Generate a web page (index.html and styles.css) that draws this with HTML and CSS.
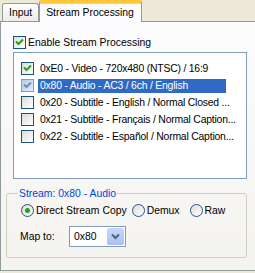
FILE: index.html
```
<!DOCTYPE html>
<html lang="en">
<head>
  <meta charset="UTF-8">
  <title>Stream Processing</title>
  <link rel="stylesheet" href="styles.css">
</head>
<body>
  <div class="tabs">
    <div class="tab">Input</div>
    <div class="tab active">Stream Processing</div>
  </div>

  <div class="panel">
    <div class="enable">
      <span class="cb checked"><svg width="11" height="11" viewBox="0 0 11 11"><path d="M2 4.5 L4.5 7 L9 2.5" fill="none" stroke="#21a121" stroke-width="2"/></svg></span>
      <span>Enable Stream Processing</span>
    </div>

    <ul class="streams">
      <li>
        <span class="cb checked"><svg width="11" height="11" viewBox="0 0 11 11"><path d="M2 4.5 L4.5 7 L9 2.5" fill="none" stroke="#21a121" stroke-width="2"/></svg></span>
        <span class="label">0xE0 - Video - 720x480 (NTSC) / 16:9</span>
      </li>
      <li class="selected">
        <span class="cb checked"><svg width="11" height="11" viewBox="0 0 11 11"><path d="M2 4.5 L4.5 7 L9 2.5" fill="none" stroke="#6f8fbf" stroke-width="2"/></svg></span>
        <span class="label">0x80 - Audio - AC3 / 6ch / English</span>
      </li>
      <li>
        <span class="cb"></span>
        <span class="label">0x20 - Subtitle - English / Normal Closed ...</span>
      </li>
      <li>
        <span class="cb"></span>
        <span class="label">0x21 - Subtitle - Français / Normal Caption...</span>
      </li>
      <li>
        <span class="cb"></span>
        <span class="label">0x22 - Subtitle - Español / Normal Caption...</span>
      </li>
    </ul>

    <fieldset class="group">
      <legend>Stream: 0x80 - Audio</legend>
      <div class="radios">
        <span class="radio on"><span class="dot"></span></span>
        <span class="radio-text">Direct Stream Copy</span>
        <span class="radio"></span>
        <span class="radio-text demux">Demux</span>
        <span class="radio"></span>
        <span class="radio-text">Raw</span>
      </div>
      <div class="map-row">
        <span class="map-label">Map to:</span>
        <div class="combo">
          <span class="value">0x80</span>
          <span class="drop"><svg width="9" height="7" viewBox="0 0 9 7"><path d="M1 1.5 L4.5 5 L8 1.5" fill="none" stroke="#4d6185" stroke-width="2"/></svg></span>
        </div>
      </div>
    </fieldset>
  </div>
</body>
</html>
```

FILE: styles.css
```
body {
  margin: 0;
  overflow: hidden;
  width: 255px;
  height: 273px;
  background: #ece9d8;
  font-family: "Liberation Sans", Arial, sans-serif;
  font-size: 10.4px;
  color: #000;
}

.tabs {
  display: flex;
  align-items: flex-end;
  height: 22px;
  padding-left: 2px;
  position: relative;
  z-index: 1;
}

.tab {
  box-sizing: border-box;
  height: 18px;
  margin-bottom: 1px;
  padding: 3px 6px 0 6px;
  border: 1px solid #919b9c;
  border-bottom: none;
  border-radius: 3px 3px 0 0;
  background: linear-gradient(to bottom, #ffffff, #ecebe6);
}

.tab.active {
  height: 22px;
  width: 103px;
  margin-bottom: 0;
  padding: 4px 0 0 6px;
  border-top: 3px solid #ffc83c;
  border-radius: 2px 2px 0 0;
  background: #fcfcfe;
  box-shadow: inset 0 1px 0 #f9d36b;
}

.panel {
  box-sizing: border-box;
  width: 262px;
  height: 250px;
  margin-top: -1px;
  padding: 14px 0 0 5px;
  border: 1px solid #919b9c;
  background: linear-gradient(to bottom, #fcfcfe, #f4f3ee);
}

.enable {
  display: flex;
  align-items: center;
  gap: 2px;
  height: 13px;
  margin-left: 7px;
}

.cb {
  box-sizing: border-box;
  flex: none;
  display: flex;
  width: 13px;
  height: 13px;
  border: 1px solid #1c5180;
  background: linear-gradient(135deg, #dcdcd7, #ffffff);
}

.selected .cb {
  border-color: #7f9dc6;
  background: linear-gradient(135deg, #b9cbe6, #e4ecf7);
}

.streams {
  box-sizing: border-box;
  list-style: none;
  width: 234px;
  height: 127px;
  margin: 3px 0 0 7px;
  padding: 7px 0 0 7px;
  border: 1px solid #7f9db9;
  background: #fff;
}

.streams li {
  display: flex;
  align-items: center;
  height: 17px;
  gap: 4px;
}

.streams .label {
  padding: 1px 2px 2px 2px;
  white-space: nowrap;
  letter-spacing: -0.2px;
}

.streams .selected .label {
  width: 184px;
  background: #316ac5;
  color: #fff;
}

.group {
  box-sizing: border-box;
  width: 241px;
  height: 71px;
  margin: 8px 0 0 0;
  padding: 3px 0 0 14px;
  border: 1px solid #d0d0bf;
  border-radius: 3px;
}

.group legend {
  margin-left: -3px;
  padding: 0 1px;
  color: #0046d5;
  line-height: 13px;
}

.radios {
  display: flex;
  align-items: center;
  height: 14px;
}

.radio {
  box-sizing: border-box;
  flex: none;
  display: flex;
  align-items: center;
  justify-content: center;
  width: 13px;
  height: 13px;
  border: 1px solid #2f4f86;
  border-radius: 50%;
  background: linear-gradient(135deg, #dcdcd7, #ffffff);
}

.radio .dot {
  width: 5px;
  height: 5px;
  border-radius: 50%;
  background: #21a121;
}

.radio-text {
  margin: 0 5px 0 2px;
}

.radio-text.demux {
  margin-right: 10px;
}

.map-row {
  display: flex;
  align-items: center;
  margin-top: 9px;
  margin-left: -1px;
}

.map-label {
  width: 49px;
}

.combo {
  box-sizing: border-box;
  display: flex;
  align-items: center;
  justify-content: space-between;
  width: 57px;
  height: 21px;
  padding: 1px;
  border: 1px solid #7f9db9;
  background: #fff;
}

.combo .value {
  padding-left: 3px;
}

.drop {
  display: flex;
  align-items: center;
  justify-content: center;
  width: 17px;
  height: 17px;
  border-radius: 2px;
  background: linear-gradient(to bottom, #c8d8fb, #aac0f2);
}
```
